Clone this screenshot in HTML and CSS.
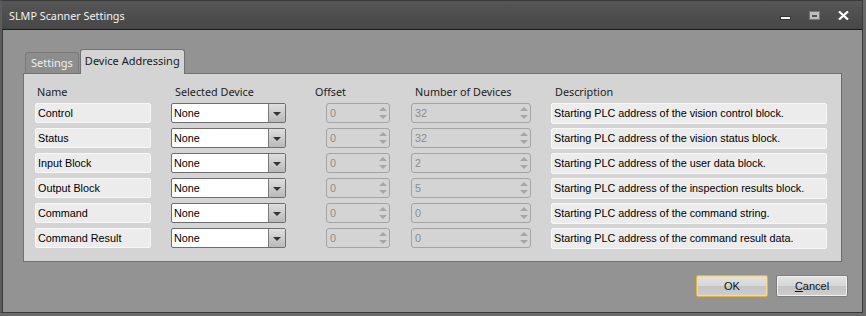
FILE: index.html
```html
<!DOCTYPE html>
<html>
<head>
<meta charset="utf-8">
<link rel="stylesheet" href="styles.css">
</head>
<body>
<div class="window">
  <div class="titlebar">
    <span class="title">SLMP Scanner Settings</span>
    <div class="controls">
      <span class="ctl min"></span>
      <span class="ctl max"><i></i></span>
      <span class="ctl close">
        <svg width="11" height="9" viewBox="0 0 11 9"><path d="M1 0.5 L10 8.5 M10 0.5 L1 8.5" stroke="#fff" stroke-width="2.2" fill="none"/></svg>
      </span>
    </div>
  </div>
  <div class="client">
    <div class="tabs">
      <div class="tab">Settings</div>
      <div class="tab active">Device Addressing</div>
    </div>
    <div class="panel">
      <div class="hdr">
        <span class="h-name">Name</span>
        <span class="h-dev">Selected Device</span>
        <span class="h-off">Offset</span>
        <span class="h-num">Number of Devices</span>
        <span class="h-desc">Description</span>
      </div>
      <div class="row">
        <div class="name">Control</div>
        <div class="combo"><span class="val">None</span><span class="drop"></span></div>
        <div class="spin off"><span>0</span><span class="arrows"><b class="up"></b><b class="dn"></b></span></div>
        <div class="spin num"><span>32</span><span class="arrows"><b class="up"></b><b class="dn"></b></span></div>
        <div class="desc">Starting PLC address of the vision control block.</div>
      </div>
      <div class="row">
        <div class="name">Status</div>
        <div class="combo"><span class="val">None</span><span class="drop"></span></div>
        <div class="spin off"><span>0</span><span class="arrows"><b class="up"></b><b class="dn"></b></span></div>
        <div class="spin num"><span>32</span><span class="arrows"><b class="up"></b><b class="dn"></b></span></div>
        <div class="desc">Starting PLC address of the vision status block.</div>
      </div>
      <div class="row">
        <div class="name">Input Block</div>
        <div class="combo"><span class="val">None</span><span class="drop"></span></div>
        <div class="spin off"><span>0</span><span class="arrows"><b class="up"></b><b class="dn"></b></span></div>
        <div class="spin num"><span>2</span><span class="arrows"><b class="up"></b><b class="dn"></b></span></div>
        <div class="desc">Starting PLC address of the user data block.</div>
      </div>
      <div class="row">
        <div class="name">Output Block</div>
        <div class="combo"><span class="val">None</span><span class="drop"></span></div>
        <div class="spin off"><span>0</span><span class="arrows"><b class="up"></b><b class="dn"></b></span></div>
        <div class="spin num"><span>5</span><span class="arrows"><b class="up"></b><b class="dn"></b></span></div>
        <div class="desc">Starting PLC address of the inspection results block.</div>
      </div>
      <div class="row">
        <div class="name">Command</div>
        <div class="combo"><span class="val">None</span><span class="drop"></span></div>
        <div class="spin off"><span>0</span><span class="arrows"><b class="up"></b><b class="dn"></b></span></div>
        <div class="spin num"><span>0</span><span class="arrows"><b class="up"></b><b class="dn"></b></span></div>
        <div class="desc">Starting PLC address of the command string.</div>
      </div>
      <div class="row">
        <div class="name">Command Result</div>
        <div class="combo"><span class="val">None</span><span class="drop"></span></div>
        <div class="spin off"><span>0</span><span class="arrows"><b class="up"></b><b class="dn"></b></span></div>
        <div class="spin num"><span>0</span><span class="arrows"><b class="up"></b><b class="dn"></b></span></div>
        <div class="desc">Starting PLC address of the command result data.</div>
      </div>
    </div>
    <div class="buttons">
      <div class="btn ok">OK</div>
      <div class="btn"><u>C</u>ancel</div>
    </div>
  </div>
</div>
</body>
</html>
```
FILE: styles.css
```css
html, body {
  margin: 0;
  padding: 0;
  width: 866px;
  height: 316px;
  overflow: hidden;
  background: #6a6a6a;
}
.window {
  width: 863px;
  height: 313px;
  box-sizing: border-box;
  border: 1px solid #3a3a3a;
  border-left: 2px solid #5c5c5c;
  box-shadow: inset 1px 0 0 #3c3c3c;
  background: #939393;
  display: flex;
  flex-direction: column;
  font-family: "Liberation Sans", Arial, sans-serif;
}
.titlebar {
  height: 28px;
  background: linear-gradient(#565656, #474747);
  border-bottom: 1px solid #1c1c1c;
  display: flex;
  align-items: center;
  justify-content: space-between;
  padding-left: 7px;
}
.title {
  color: #f2f2f2;
  font-family: "Noto Sans", "DejaVu Sans", sans-serif;
  font-size: 10.8px;
  margin-top: 1px;
}
.controls {
  display: flex;
  align-items: center;
  height: 28px;
}
.ctl { display: block; }
.min {
  width: 11px;
  height: 4px;
  background: #f4f4f4;
  border: 1px solid #333;
  box-sizing: border-box;
  margin-top: 5px;
  margin-right: 18px;
}
.max {
  width: 11px;
  height: 9px;
  background: #bdbdbd;
  border: 1px solid #777;
  box-sizing: border-box;
  display: flex;
  align-items: center;
  justify-content: center;
  margin-right: 18px;
  margin-top: 1px;
}
.max i {
  display: block;
  width: 5px;
  height: 2px;
  background: #555;
}
.close {
  width: 11px;
  height: 9px;
  margin-right: 13px;
  margin-top: 1px;
  display: flex;
}
.client {
  flex: 1;
  padding: 20px 0 0 21px;
  display: flex;
  flex-direction: column;
}
.tabs {
  display: flex;
  align-items: flex-end;
  height: 23px;
  padding-left: 2px;
  position: relative;
  z-index: 1;
}
.tab {
  font-family: "Noto Sans", "DejaVu Sans", sans-serif;
  font-size: 11px;
  white-space: nowrap;
  height: 21px;
  box-sizing: border-box;
  padding: 2px 5px 0 5px;
  color: #f0f0f0;
  background: #8d8d8d;
  border: 1px solid #7a7a7a;
  border-bottom: none;
  border-radius: 3px 3px 0 0;
  margin-right: 1px;
}
.tab.active {
  height: 25px;
  margin-bottom: -1px;
  background: #d4d4d4;
  color: #1a1a1a;
  border-color: #727272;
  padding: 3px 4px 0 4px;
}
.panel {
  width: 819px;
  height: 189px;
  box-sizing: border-box;
  background: #d4d4d4;
  border: 1px solid #727272;
  border-right-color: #6a6a6a;
  padding: 8px 0 0 11px;
}
.hdr {
  display: flex;
  height: 18px;
  align-items: center;
  font-family: "Noto Sans", "DejaVu Sans", sans-serif;
  font-size: 10.8px;
  color: #222;
  margin-bottom: 3px;
  white-space: nowrap;
}
.hdr span { display: block; }
.h-name { margin-left: 2px; width: 138px; }
.h-dev { width: 140px; }
.h-off { width: 100px; }
.h-num { width: 140px; }
.row {
  display: flex;
  height: 21px;
  margin-bottom: 4px;
  font-size: 10.8px;
  color: #000;
  white-space: nowrap;
}
.name {
  width: 116px;
  height: 20px;
  box-sizing: border-box;
  background: #ececec;
  border: 1px solid #f7f7f7;
  border-radius: 2px;
  padding: 3px 0 0 2px;
}
.combo {
  margin-left: 20px;
  width: 115px;
  height: 20px;
  box-sizing: border-box;
  background: #fff;
  border: 1px solid #6e6e6e;
  border-radius: 2px;
  display: flex;
}
.combo .val {
  flex: 1;
  padding: 3px 0 0 2px;
}
.drop {
  width: 16px;
  border-left: 1px solid #7a7a7a;
  background: linear-gradient(#dedede, #b9b9b9);
  display: flex;
  align-items: center;
  justify-content: center;
}
.drop::after {
  content: "";
  display: block;
  border-left: 4px solid transparent;
  border-right: 4px solid transparent;
  border-top: 4px solid #333;
  margin-top: 1px;
}
.spin {
  height: 20px;
  box-sizing: border-box;
  border: 1px solid #a4a4a4;
  border-radius: 3px;
  display: flex;
  justify-content: space-between;
  color: #8c8c8c;
  padding-left: 3px;
}
.spin > span:first-child { padding-top: 3px; }
.spin.off { margin-left: 40px; width: 64px; }
.spin.num { margin-left: 21px; width: 120px; }
.arrows {
  width: 12px;
  display: flex;
  flex-direction: column;
  justify-content: center;
  align-items: center;
  gap: 4px;
}
.arrows b {
  display: block;
  width: 0;
  height: 0;
  border-left: 4px solid transparent;
  border-right: 4px solid transparent;
}
.arrows .up { border-bottom: 4px solid #a6a6a6; }
.arrows .dn { border-top: 4px solid #a6a6a6; }
.desc {
  margin-left: 20px;
  width: 276px;
  height: 21px;
  box-sizing: border-box;
  background: #ececec;
  border: 1px solid #f7f7f7;
  border-radius: 2px;
  padding: 3px 0 0 2px;
}
.buttons {
  display: flex;
  justify-content: flex-end;
  padding: 13px 14px 0 0;
  gap: 8px;
}
.btn {
  width: 72px;
  height: 22px;
  box-sizing: border-box;
  border: 1px solid #7c7c7c;
  border-radius: 2px;
  background: linear-gradient(#e4e4e4 0%, #d6d6d6 50%, #c4c4c4 51%, #cdcdcd 100%);
  box-shadow: inset 0 0 0 1px #f0f0f0;
  font-size: 11px;
  display: flex;
  align-items: center;
  justify-content: center;
  color: #111;
}
.btn.ok {
  border-color: #e2b23a;
  box-shadow: inset 0 0 0 1px #f3dc9a;
}
```
